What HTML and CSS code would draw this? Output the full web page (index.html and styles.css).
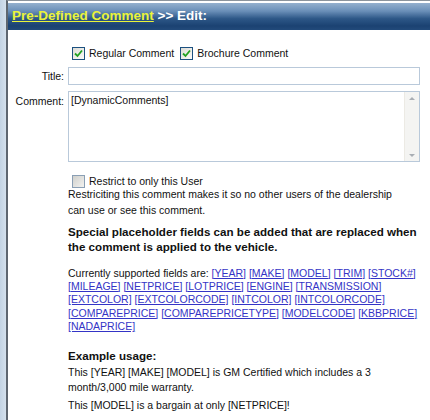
FILE: index.html
```html
<!DOCTYPE html>
<html>
<head>
<meta charset="utf-8">
<link rel="stylesheet" href="styles.css">
</head>
<body>
<div class="page">
  <div class="strip"></div>
  <div class="dialog">
    <div class="header"><a class="crumb" href="#">Pre-Defined Comment</a> &gt;&gt; Edit:</div>
    <div class="form">
      <div></div>
      <div class="checks">
        <label class="chk"><span class="box on"><svg viewBox="0 0 9 9" width="9" height="9"><path d="M1 4.5 L3.5 7 L8 1.5" fill="none" stroke="#21a121" stroke-width="1.8"/></svg></span>Regular Comment</label>
        <label class="chk"><span class="box on"><svg viewBox="0 0 9 9" width="9" height="9"><path d="M1 4.5 L3.5 7 L8 1.5" fill="none" stroke="#21a121" stroke-width="1.8"/></svg></span>Brochure Comment</label>
      </div>

      <div class="lbl lbl-title">Title:</div>
      <div class="input"></div>

      <div class="lbl lbl-comment">Comment:</div>
      <div class="textarea">
        <div class="ta-text">[DynamicComments]</div>
        <div class="scroll">
          <span class="arrow up"></span>
          <span class="arrow down"></span>
        </div>
      </div>

      <div></div>
      <div class="info">
        <label class="chk restrict"><span class="box"></span>Restrict to only this User</label>
        <p class="note">Restriciting this comment makes it so no other users of the dealership can use or see this comment.</p>
        <p class="special">Special placeholder fields can be added that are replaced when the comment is applied to the vehicle.</p>
        <p class="fields">Currently supported fields are: <a href="#">[YEAR]</a> <a href="#">[MAKE]</a> <a href="#">[MODEL]</a> <a href="#">[TRIM]</a> <a href="#">[STOCK#]</a> <a href="#">[MILEAGE]</a> <a href="#">[NETPRICE]</a> <a href="#">[LOTPRICE]</a> <a href="#">[ENGINE]</a> <a href="#">[TRANSMISSION]</a> <a href="#">[EXTCOLOR]</a> <a href="#">[EXTCOLORCODE]</a> <a href="#">[INTCOLOR]</a> <a href="#">[INTCOLORCODE]</a> <a href="#">[COMPAREPRICE]</a> <a href="#">[COMPAREPRICETYPE]</a> <a href="#">[MODELCODE]</a> <a href="#">[KBBPRICE]</a> <a href="#">[NADAPRICE]</a></p>
        <p class="ex-title">Example usage:</p>
        <p class="ex">This [YEAR] [MAKE] [MODEL] is GM Certified which includes a 3 month/3,000 mile warranty.</p>
        <p class="ex ex2">This [MODEL] is a bargain at only [NETPRICE]!</p>
      </div>
    </div>
  </div>
</div>
</body>
</html>
```

FILE: styles.css
```css
html, body {
  margin: 0;
  padding: 0;
  background: #ffffff;
}
body {
  font-family: "Liberation Sans", Arial, sans-serif;
  font-size: 10.5px;
  color: #111;
  width: 430px;
  height: 420px;
  overflow: hidden;
}
.page {
  display: flex;
  height: 420px;
}
.strip {
  width: 6px;
  flex: none;
  background: linear-gradient(to right, #c3d3e4, #d4e0ec);
}
.dialog {
  flex: 1;
  border-left: 2px solid #5e6670;
  border-top: 1px solid #8c949c;
  background: #fff;
}
.header {
  margin-top: 2px;
  height: 27px;
  box-sizing: border-box;
  padding: 5px 0 0 4px;
  background: linear-gradient(to bottom, #94b0ce 0%, #6a8fb8 30%, #2d5787 58%, #1b4272 85%, #224a7a 100%);
  color: #fff;
  font-weight: bold;
  font-size: 13.5px;
  line-height: 16px;
  white-space: nowrap;
}
.crumb {
  color: #eaf33a;
  text-decoration: underline;
}
.form {
  display: grid;
  grid-template-columns: 56px 1fr;
  column-gap: 4px;
  padding-right: 10px;
}
.checks {
  margin-top: 16px;
  display: flex;
  height: 14px;
  align-items: center;
}
.chk {
  display: inline-flex;
  align-items: center;
  line-height: 14px;
}
.box {
  width: 11px;
  height: 11px;
  border: 1px solid #1c5180;
  background: linear-gradient(135deg, #dcdcd6, #fbfbf9);
  margin: 0 4px 0 4px;
  display: inline-flex;
  align-items: center;
  justify-content: center;
  flex: none;
}
.box:not(.on) {
  border-color: #8a9fb5;
  background: linear-gradient(135deg, #d0d0cc, #f2f2f0);
}
.chk + .chk .box {
  margin-left: 6px;
}
.lbl {
  text-align: right;
  line-height: 14px;
}
.lbl-title {
  margin-top: 9px;
}
.input {
  margin-top: 7px;
  height: 16px;
  border: 1px solid #b9c9da;
}
.lbl-comment {
  margin-top: 9px;
}
.textarea {
  margin-top: 6px;
  height: 69px;
  border: 1px solid #b9c9da;
  display: flex;
}
.ta-text {
  flex: 1;
  padding: 1px 2px;
  line-height: 14px;
}
.scroll {
  width: 15px;
  background: #f4f4f2;
  border-left: 1px solid #eceae4;
  display: flex;
  flex-direction: column;
  justify-content: space-between;
  align-items: center;
  padding: 5px 0 4px;
  box-sizing: border-box;
}
.arrow {
  width: 0;
  height: 0;
  border-left: 3px solid transparent;
  border-right: 3px solid transparent;
}
.arrow.up {
  border-bottom: 3px solid #a9aeb4;
}
.arrow.down {
  border-top: 3px solid #a9aeb4;
}
.info {
  padding-top: 12px;
}
.restrict {
  height: 14px;
}
p {
  margin: 0;
}
.note {
  margin-top: -4px;
  padding-right: 14px;
  line-height: 16px;
}
.special {
  margin-top: 6px;
  font-weight: bold;
  font-size: 11.6px;
  line-height: 15px;
}
.fields {
  margin-top: 13px;
  line-height: 13.4px;
}
.fields a {
  color: #3434c6;
  text-decoration: underline;
}
.ex-title {
  margin-top: 14px;
  font-weight: bold;
  font-size: 11.6px;
  line-height: 15px;
}
.ex {
  margin-top: 2px;
  line-height: 15px;
}
.ex2 {
  margin-top: 3px;
}
```
